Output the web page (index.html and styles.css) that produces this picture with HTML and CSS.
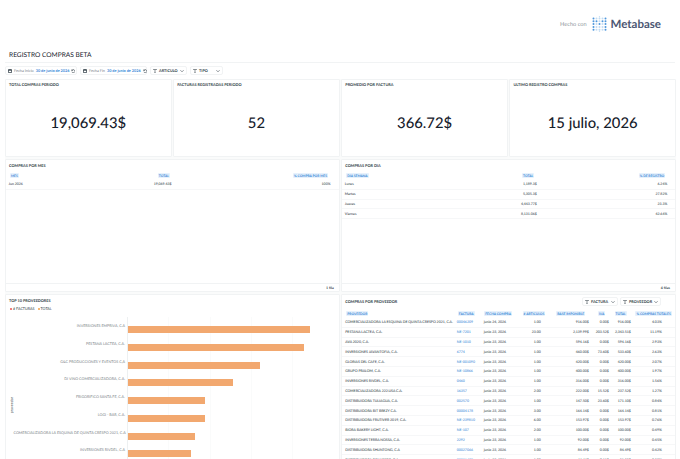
FILE: index.html
```html
<!DOCTYPE html>
<html lang="es">
<head>
  <meta charset="UTF-8" />
  <meta name="viewport" content="width=device-width, initial-scale=1.0"/>
  <title>Registro Compras Beta</title>
  <link rel="stylesheet" href="styles.css">
</head>
<body>
  <header class="brand">
    <span class="made-with">Hecho con</span>
    <svg class="logo" viewBox="0 0 15 16">
      <g id="logo-dots"></g>
    </svg>
    <span class="brand-name">Metabase</span>
  </header>

  <h1>REGISTRO COMPRAS BETA</h1>

  <div class="filters">
    <div class="filter filter-start">
      <svg class="icon calendar" viewBox="0 0 10 10"><path d="M1 2h8v7H1zM3 .5v2M7 .5v2M1 3h8" /></svg>
      <span>Fecha Inicio</span><b>30 de junio de 2026</b>
      <svg class="icon" viewBox="0 0 10 10"><path d="M2 1v3h3M2 4a4 4 0 1 1 0 3" /></svg>
    </div>
    <div class="filter filter-end">
      <svg class="icon calendar" viewBox="0 0 10 10"><path d="M1 2h8v7H1zM3 .5v2M7 .5v2M1 3h8" /></svg>
      <span>Fecha Fin</span><b>30 de junio de 2026</b>
      <svg class="icon" viewBox="0 0 10 10"><path d="M2 1v3h3M2 4a4 4 0 1 1 0 3" /></svg>
    </div>
    <div class="filter filter-article">
      <svg class="icon" viewBox="0 0 10 10"><path d="M1 2.5V1h8v1.500M5 1v8M3.500 9h3" /></svg>
      <strong>ARTICULO</strong>
      <svg class="icon last" viewBox="0 0 10 10"><path d="M1 3l4 4 4-4" /></svg>
    </div>
    <div class="filter filter-type">
      <svg class="icon" viewBox="0 0 10 10"><path d="M1 2.5V1h8v1.500M5 1v8M3.500 9h3" /></svg>
      <strong>TIPO</strong>
      <svg class="icon last" viewBox="0 0 10 10"><path d="M1 3l4 4 4-4" /></svg>
    </div>
  </div>

  <main class="dashboard">
    <section class="card metric"><h2>TOTAL COMPRAS PERIODO</h2><p>19,069.43$</p></section>
    <section class="card metric"><h2>FACTURAS REGISTRADAS PERIODO</h2><p>52</p></section>
    <section class="card metric"><h2>PROMEDIO POR FACTURA</h2><p>366.72$</p></section>
    <section class="card metric"><h2>ULTIMO REGISTRO COMPRAS</h2><p>15 julio, 2026</p></section>

    <section class="card wide">
      <h2>COMPRAS POR MES</h2>
      <div class="table">
        <div class="row head by-month"><span><i>MES</i></span><span><i>TOTAL</i></span><span><i>% COMPRA POR MES</i></span></div>
        <div class="row by-month"><span>Jun 2026</span><span>19,069.43$</span><span>100%</span></div>
      </div>
      <footer>1 fila</footer>
    </section>

    <section class="card wide">
      <h2>COMPRAS POR DIA</h2>
      <div class="table">
        <div class="row head by-day"><span><i>DIA SEMANA</i></span><span><i>TOTAL</i></span><span><i>% DE REGISTRO</i></span></div>
        <div class="row by-day"><span>Lunes</span><span>1,189.3$</span><span>6.24%</span></div>
        <div class="row by-day"><span>Martes</span><span>5,305.3$</span><span>27.82%</span></div>
        <div class="row by-day"><span>Jueves</span><span>4,443.77$</span><span>23.3%</span></div>
        <div class="row by-day"><span>Viernes</span><span>8,131.06$</span><span>42.64%</span></div>
      </div>
      <footer>4 filas</footer>
    </section>

    <section class="card wide">
      <h2>TOP 10 PROVEEDORES</h2>
      <div class="legend"><span class="key invoices"># FACTURAS</span><span class="key total">TOTAL</span></div>
      <div class="chart">
        <div class="axis-name"><span>proveedor</span></div>
        <div class="bars" id="bars"></div>
      </div>
    </section>

    <section class="card wide">
      <div class="card-top">
        <h2>COMPRAS POR PROVEEDOR</h2>
        <div class="filter filter-invoice">
          <svg class="icon" viewBox="0 0 10 10"><path d="M1 2.5V1h8v1.500M5 1v8M3.500 9h3" /></svg>
          <strong>FACTURA</strong>
          <svg class="icon last" viewBox="0 0 10 10"><path d="M1 3l4 4 4-4" /></svg>
        </div>
        <div class="filter filter-supplier">
          <svg class="icon" viewBox="0 0 10 10"><path d="M1 2.5V1h8v1.500M5 1v8M3.500 9h3" /></svg>
          <strong>PROVEEDOR</strong>
          <svg class="icon last" viewBox="0 0 10 10"><path d="M1 3l4 4 4-4" /></svg>
        </div>
      </div>
      <div class="table" id="suppliers">
        <div class="row head by-supplier">
          <span><i>PROVEEDOR</i></span><span><i>FACTURA</i></span><span><i>FECHA COMPRA</i></span><span><i># ARTICULOS</i></span>
          <span><i>BASE IMPONIBLE</i></span><span><i>IVA</i></span><span><i>TOTAL</i></span><span><i>% COMPRAS TOTALES</i></span>
        </div>
      </div>
    </section>
  </main>

  <script src="app.js"></script>
</body>
</html>
```
FILE: styles.css
```css
:root {
  --text: #303d46;
  --dark: #16202b;
  --blue: #3585d6;
  --blue-bg: #e6f1fc;
  --line: #f1f3f4;
  --bar: #f2a86f;
}

* {
  box-sizing: border-box;
}

body {
  margin: 0;
  height: 459px;
  overflow: hidden;
  font-family: Lato, "Liberation Sans", sans-serif;
  font-size: 4px;
  color: var(--text);
  background: #fff;
  text-rendering: geometricPrecision;
}

.brand {
  display: flex;
  align-items: center;
  justify-content: flex-end;
  height: 49px;
  padding: 0 19px 1px 0;
}

.made-with {
  margin-right: 5px;
  font-size: 5.6px;
  color: #8f979d;
}

.logo {
  width: 15px;
  height: 16px;
  margin-right: 4px;
}

.brand-name {
  font-size: 11.500px;
  font-weight: 700;
  color: #4c5773;
}

h1 {
  height: 14px;
  margin: 0 5px;
  padding-left: 4px;
  border-bottom: 1px solid var(--line);
  font-size: 6.6px;
  font-weight: 400;
  line-height: 13px;
  color: var(--dark);
}

.filters {
  display: flex;
  gap: 3px;
  height: 16px;
  padding: 3px 5px 4px;
}

.filter {
  display: flex;
  align-items: center;
  gap: 2px;
  height: 9px;
  padding: 0 2px;
  border: 1px solid var(--line);
  border-radius: 2px;
  font-size: 3.8px;
  white-space: nowrap;
}

.filter span {
  color: #7d868c;
}

.filter b {
  font-weight: 700;
  color: var(--blue);
}

.filter strong {
  font-weight: 700;
}

.filter-start { width: 72px; }
.filter-end { width: 67px; }
.filter-article { width: 37px; }
.filter-type { width: 33px; }
.filter-invoice { width: 36px; }
.filter-supplier { width: 41px; }

.icon {
  flex: none;
  width: 4px;
  height: 4px;
  fill: none;
  stroke: var(--text);
  stroke-width: 1.4;
}

.calendar {
  stroke-width: 2;
}

.icon.last {
  margin-left: auto;
}

.dashboard {
  display: grid;
  grid-template-columns: repeat(4, 1fr);
  grid-template-rows: 78px 133px 172px;
  gap: 2px 1.5px;
  width: 671px;
  margin-left: 5px;
  background: #fafbfb;
}

.card {
  display: flex;
  flex-direction: column;
  min-width: 0;
  overflow: hidden;
  background: #fff;
  border: 1px solid var(--line);
  border-radius: 1px;
}

.wide {
  grid-column: span 2;
}

h2 {
  margin: 0;
  padding: 2.5px 3px 0 3px;
  font-size: 3.85px;
  font-weight: 700;
  line-height: 6px;
  color: var(--text);
}

.metric h2 {
  padding-top: 1.500px;
}

.metric p {
  margin: 25.500px 0 0;
  font-size: 14.800px;
  font-weight: 500;
  line-height: 21px;
  text-align: center;
  color: var(--dark);
}

.table {
  margin-top: 2.300px;
}

.row {
  display: grid;
  height: 9.8px;
  align-items: center;
  border-bottom: 1px solid #f6f7f8;
  font-size: 3.5px;
  font-weight: 500;
  white-space: nowrap;
}

.row span {
  text-align: right;
}

.row span:first-child {
  text-align: left;
}

.row.head {
  height: 9.300px;
  border-bottom: 0;
  font-size: 3.3px;
  font-weight: 700;
}

.head i {
  padding: 0.5px 1px;
  border-radius: 1px;
  font-style: normal;
  color: var(--blue);
  background: var(--blue-bg);
}

.by-month {
  grid-template-columns: 50px 113px 159px;
  padding-left: 2.5px;
}

.by-day {
  grid-template-columns: 50px 142px 130.5px;
  padding-left: 2.5px;
}

.by-month.head,
.by-day.head,
.by-supplier.head {
  padding-left: 4px;
}

.by-month.head { grid-template-columns: 50px 110px 158px; }
.by-day.head { grid-template-columns: 50px 138px 131px; }

.card footer {
  height: 8px;
  margin-top: auto;
  padding: 1px 5px 0 0;
  border-top: 1px solid var(--line);
  font-size: 3.5px;
  font-weight: 700;
  line-height: 6px;
  text-align: right;
}

.legend {
  display: flex;
  gap: 3px;
  padding: 2px 4px 0;
  font-size: 3.7px;
  line-height: 6px;
}

.key {
  display: flex;
  align-items: center;
  gap: 1px;
}

.key::before {
  content: "";
  width: 2px;
  height: 2px;
  border-radius: 50%;
}

.invoices::before { background: #e75454; }
.total::before { background: #f2a045; }

.chart {
  display: flex;
  margin-top: 5.500px;
}

.axis-name {
  width: 7.500px;
  padding: 80px 0 0 4px;
}

.axis-name span {
  writing-mode: vertical-rl;
  transform: rotate(180deg);
  font-size: 3.6px;
  line-height: 4px;
}

.bars {
  width: 300px;
}

.bar-row {
  display: grid;
  grid-template-columns: 113px 1fr;
  height: 17.75px;
}

.bar-label {
  padding: 6px 1.500px 0 0;
  font-size: 3.7px;
  line-height: 6px;
  text-align: right;
  white-space: nowrap;
  color: #7b8388;
}

.bar-track {
  padding-top: 9px;
  border-left: 1px solid #edf0f1;
  background: repeating-linear-gradient(to right, transparent 0 40.3px, #fafbfb 40.3px 41.3px);
}

.bar {
  height: 7px;
  background: var(--bar);
}

.card-top {
  display: flex;
  height: 12px;
  gap: 2px;
  padding: 2px 14px 0 0;
}

.card-top h2 {
  flex: 1;
  padding-top: 1.500px;
}

#suppliers {
  margin-top: 1.200px;
}

#suppliers .head {
  height: 9.8px;
}

.by-supplier {
  grid-template-columns: 111.5px 27px 35px 22px 48px 20px 22px 31px;
  padding-left: 3px;
}

.by-supplier span:nth-child(2),
.by-supplier span:nth-child(3) {
  text-align: left;
}

.by-supplier:not(.head) span:nth-child(2) {
  color: var(--blue);
}

.by-supplier.head {
  grid-template-columns: 111.5px 26.5px 36px 25px 40px 20px 21.5px 45px;
}
```
FILE: app.js
```js
// supplier, bar length in px
const bars = [
  ['INVERSIONES EMPRIVA, C.A', 182],
  ['PESTANA LACTEA, C.A.', 176],
  ['G&C PRODUCCIONES Y EVENTOS C,A', 132.5],
  ['DI VINO COMERCIALIZADORA, C.A.', 105],
  ['FRIGORIFICO SANTA FE, C.A.', 77.5],
  ['LOGI - BAR, C.A.', 77.5],
  ['COMERCIALIZADORA LA ESQUINA DE QUINTA CRESPO 2021, C.A', 67],
  ['INVERSIONES RIVDEL, C.A', 63.5],
];

const suppliers = [
  ['COMERCIALIZADORA LA ESQUINA DE QUINTA CRESPO 2021, C.A.', '00046209', 'junio 24, 2026', '1.00', '916.00$', '0.00$', '916.00$', '4.03%'],
  ['PESTANA LACTEA, C.A.', 'NE-7201', 'junio 23, 2026', '23.00', '2,139.99$', '203.52$', '2,343.51$', '11.19%'],
  ['AVA 2020, C.A.', 'NE-1010', 'junio 23, 2026', '1.00', '594.16$', '0.00$', '594.16$', '2.93%'],
  ['INVERSIONES JAVANTOFIA, C.A.', '6774', 'junio 23, 2026', '1.00', '460.00$', '73.60$', '533.60$', '2.63%'],
  ['GLORIAS DEL CAFE, C.A.', 'NE-001090', 'junio 23, 2026', '1.00', '420.00$', '0.00$', '420.00$', '2.07%'],
  ['GRUPO PRALOM, C.A.', 'NE-10866', 'junio 23, 2026', '1.00', '400.00$', '0.00$', '400.00$', '1.97%'],
  ['INVERSIONES RIVDEL, C.A.', '0460', 'junio 23, 2026', '1.00', '316.00$', '0.00$', '316.00$', '1.56%'],
  ['COMERCIALIZADORA 222.USA C.A.', '16357', 'junio 23, 2026', '2.00', '222.00$', '15.52$', '237.52$', '1.27%'],
  ['DISTRIBUIDORA TULIAGUA, C.A.', '002570', 'junio 23, 2026', '1.00', '147.50$', '23.60$', '171.10$', '0.84%'],
  ['DISTRIBUIDORA BIT BREZY C.A.', '00004178', 'junio 23, 2026', '3.00', '164.14$', '0.00$', '164.14$', '0.81%'],
  ['DISTRIBUIDORA FRUTIVER 2019, C.A.', 'NE-239810', 'junio 23, 2026', '6.00', '153.97$', '0.00$', '153.97$', '0.76%'],
  ['BIORA BAKERY LIGHT, C.A.', 'NE-107', 'junio 23, 2026', '2.00', '100.00$', '0.00$', '100.00$', '0.49%'],
  ['INVERSIONES TERRA NOSSA, C.A.', '2292', 'junio 23, 2026', '1.00', '92.00$', '0.00$', '92.00$', '0.45%'],
  ['DISTRIBUIDORA SHUNTONG, C.A', '00027066', 'junio 23, 2026', '1.00', '84.49$', '0.00$', '84.49$', '0.42%'],
  ['DISTRIBUIDORA POLNESCO, C.A.', '00021475', 'junio 23, 2026', '1.00', '44.44$', '7.11$', '51.55$', '0.25%'],
];

document.getElementById('bars').innerHTML = bars.map(([name, size]) => `
  <div class="bar-row">
    <div class="bar-label">${name.replace('&', '&amp;')}</div>
    <div class="bar-track"><div class="bar" style="width: ${size}px"></div></div>
  </div>`).join('');

suppliers.forEach(cells => {
  const row = document.createElement('div');
  row.className = 'row by-supplier';
  row.innerHTML = cells.map(c => `<span>${c}</span>`).join('');
  document.getElementById('suppliers').appendChild(row);
});

// logo: a 5 x 5 grid of dots, the strong ones form the M, plus one above and below
const strong = ['0,0', '4,0', '0,1', '1,1', '3,1', '4,1', '0,2', '2,2', '4,2', '0,3', '4,3', '0,4', '4,4'];
let dots = '';
for (let x = 0; x < 5; x++) {
  for (let y = 0; y < 5; y++) {
    const color = strong.includes(`${x},${y}`) ? '#4f97dc' : '#c3dcf3';
    dots += `<circle cx="${1.5 + x * 3}" cy="${2.5 + y * 2.8}" r="1" fill="${color}" />`;
  }
}
dots += '<circle cx="7.5" cy=".7" r=".7" fill="#c3dcf3" /><circle cx="7.5" cy="15.3" r=".7" fill="#c3dcf3" />';
document.getElementById('logo-dots').innerHTML = dots;
```
